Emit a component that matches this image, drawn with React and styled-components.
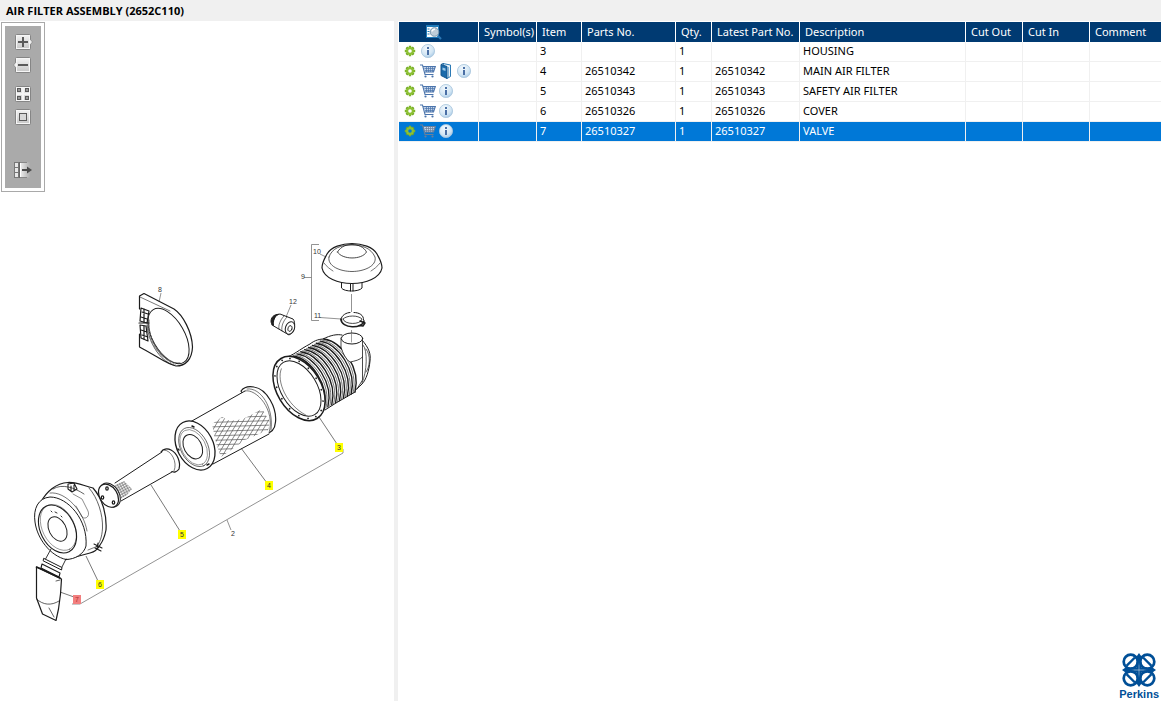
import React from "react";
import styled, { createGlobalStyle, css } from "styled-components";

const GlobalStyle = createGlobalStyle`
  *, *::before, *::after { box-sizing: border-box; }
  body {
    margin: 0;
    background: #fff;
    color: #000;
    font-family: "Noto Sans", "Open Sans", sans-serif;
    font-size: 11px;
    line-height: 16px;
  }
`;

const Page = styled.div`
  min-height: 100vh;
  display: flex;
  flex-direction: column;
`;

const TitleBar = styled.header`
  height: 21px;
  padding: 0 6px;
  background: #f0f0f0;
  display: flex;
  align-items: center;
`;

const Title = styled.h1`
  margin: 0;
  font-family: "Open Sans", "Noto Sans", sans-serif;
  font-size: 11px;
  font-weight: 700;
  line-height: 20px;
`;

const Workspace = styled.main`
  flex: 1;
  display: grid;
  grid-template-columns: 394fr 4px 763fr;
`;

const Splitter = styled.div`
  background: #f0f0f0;
`;

const DiagramPane = styled.section`
  min-width: 0;
  display: flex;
  flex-direction: column;
  align-items: flex-start;
`;

const PartsPane = styled.section`
  min-width: 0;
  padding: 1px 0 0 1px;
  display: flex;
  flex-direction: column;
`;

const ToolFrame = styled.div`
  margin: 1px 0 0 1px;
  padding: 3px;
  border: 1px solid #a9a9a9;
  background: #fff;
`;

const ToolStrip = styled.div`
  display: flex;
  flex-direction: column;
  gap: 13px;
  padding: 8px 10px 10px;
  background: #aaa;
`;

const ToolGroup = styled.div`
  display: flex;
  flex-direction: column;
  gap: 7px;
  padding-top: ${(p) => (p.$apart ? "24px" : "0")};
`;

const iconButton = css`
  padding: 0;
  border: 0;
  background: none;
  display: grid;
  place-items: center;
  cursor: pointer;
`;

const ToolButton = styled.button`
  ${iconButton}
  width: 16px;
  height: 16px;

  svg { overflow: visible; display: block; }
`;

const Drawing = styled.svg`
  display: block;
  width: 100%;
  height: auto;
  font-family: "Liberation Sans", Arial, sans-serif;
  font-size: 7px;
`;

const PartsTable = styled.table`
  width: 100%;
  table-layout: fixed;
  border-collapse: separate;
  border-spacing: 0;
`;

const HeadCell = styled.th`
  height: 20px;
  padding: ${(p) => (p.$icon ? "0 9px 0 0" : "0 0 0 5px")};
  border-right: 1px solid #fff;
  background: #003a72;
  color: #fff;
  font-weight: 400;
  text-align: left;
  white-space: nowrap;
  overflow: hidden;

  &:last-child { border-right: 0; }
  svg { display: block; margin: 0 auto; }
`;

const Row = styled.tr`
  background: ${(p) => (p.$selected ? "#0078d7" : "#fff")};
  color: ${(p) => (p.$selected ? "#fff" : "#000")};
`;

const Cell = styled.td`
  height: 20px;
  padding: 0 0 2px 3px;
  border-right: 1px solid #f0f0f0;
  border-bottom: 1px solid #f0f0f0;
  white-space: nowrap;
  overflow: hidden;

  &:last-child { border-right: 0; }
`;

const IconCell = styled(Cell)`
  padding-left: 2px;
`;

const IconList = styled.div`
  display: flex;
  height: 16px;
  align-items: center;
`;

const RowButton = styled.button`
  ${iconButton}
  width: 18px;
  height: 16px;
`;

const Brand = styled.div`
  margin-top: auto;
  align-self: flex-end;
  padding-right: 2px;
  display: flex;
  flex-direction: column;
  align-items: center;
  color: #004f97;
  font-family: "Liberation Sans", Arial, sans-serif;
  font-size: 11px;
  font-weight: 700;
  line-height: 14px;
`;

/* ---------- toolbar icons ---------- */

function Key({ children, tab }) {
  return (
    <svg width="16" height="16" viewBox="0 0 16 16" aria-hidden="true">
      <defs>
        <linearGradient id="keyFace" x1="0" y1="0" x2="0" y2="1">
          <stop offset="0" stopColor="#f4f4f4" />
          <stop offset="1" stopColor="#c6c6c6" />
        </linearGradient>
      </defs>
      <rect x=".5" y=".5" width="15" height="15" rx="1" fill="url(#keyFace)" stroke="#858585" />
      <rect x="1.500" y="1.500" width="13" height="13" fill="none" stroke="#f6f6f6" />
      {tab === "right" && <path d="M15 5 L17.500 8 L15 11" fill="#eee" stroke="#858585" strokeWidth=".8" />}
      {tab === "left" && <path d="M1 5 L-1.500 8 L1 11" fill="#eee" stroke="#858585" strokeWidth=".8" />}
      {children}
    </svg>
  );
}

const ZoomInIcon = () => (
  <Key tab="right"><path d="M3 8h10M8 3v10" stroke="#5a5a5a" strokeWidth="2" /></Key>
);
const ZoomOutIcon = () => (
  <Key tab="left"><path d="M3 8h10" stroke="#5a5a5a" strokeWidth="2" /></Key>
);
const TilesIcon = () => (
  <Key>
    <path d="M8 2v12M2 8h12" stroke="#f4f4f4" strokeWidth="2" />
    <g fill="#999" stroke="#5a5a5a">
      <rect x="2.500" y="2.500" width="3" height="3" />
      <rect x="10.500" y="2.500" width="3" height="3" />
      <rect x="2.500" y="10.500" width="3" height="3" />
      <rect x="10.500" y="10.500" width="3" height="3" />
    </g>
  </Key>
);
const FitIcon = () => (
  <Key><rect x="4.500" y="4.500" width="7" height="7" fill="#d8d8d8" stroke="#5a5a5a" /></Key>
);
const ExportIcon = () => (
  <svg width="16" height="16" viewBox="0 0 16 16" aria-hidden="true">
    <defs>
      <linearGradient id="fade" x1="0" y1="0" x2="1" y2="0">
        <stop offset="0" stopColor="#f2f2f2" />
        <stop offset="1" stopColor="#aaa" />
      </linearGradient>
    </defs>
    <rect x="-1" y="0" width="5" height="16" fill="#777" />
    <path d="M0 1h3v4H0zM0 6h3v4H0zM0 11h3v4H0z" fill="#e8e8e8" />
    <rect x="4.500" y=".5" width="11" height="15" fill="url(#fade)" />
    <path d="M4.500 0v16" stroke="#666" />
    <path d="M5 .5h7M5 15.500h7" stroke="#888" />
    <path d="M5.500 1v14" stroke="#fff" />
    <path d="M7 8h6" stroke="#4c4c4c" strokeWidth="2" />
    <path d="M12 4.500 L17 8 L12 11.500Z" fill="#4c4c4c" />
  </svg>
);

/* ---------- row icons ---------- */

const GearIcon = ({ hole }) => (
  <svg width="12" height="12" viewBox="0 0 12 12" aria-hidden="true">
    <g stroke="#7db529" strokeWidth="2.400">
      <path d="M6 .8v10.400M.8 6h10.400" />
      <path d="M2.400 2.400l7.200 7.200M9.600 2.400L2.400 9.600" stroke="#6da423" />
    </g>
    <circle cx="6" cy="6" r="3.900" fill="#8cc032" />
    <circle cx="6" cy="6" r="1.800" fill={hole} />
  </svg>
);

const InfoIcon = () => (
  <svg width="14" height="14" viewBox="0 0 14 14" aria-hidden="true">
    <defs>
      <radialGradient id="infoFill" cx=".4" cy=".3" r=".8">
        <stop offset="0" stopColor="#f1f8fd" />
        <stop offset=".6" stopColor="#d3e6f4" />
        <stop offset="1" stopColor="#9dc3e2" />
      </radialGradient>
    </defs>
    <circle cx="7" cy="7" r="6.600" fill="url(#infoFill)" stroke="#a9c6dd" strokeWidth=".8" />
    <rect x="6" y="3" width="2" height="2" fill="#4a6fa5" />
    <rect x="6" y="6" width="2" height="5" fill="#4a6fa5" />
  </svg>
);

const CartIcon = ({ line }) => (
  <svg width="16" height="14" viewBox="0 0 16 14" aria-hidden="true">
    <path d="M3.500 2.500H15L13.500 8H5Z" fill="#c3d3e8" />
    <path d="M6.500 3v5M8.500 3v5M10.500 3v5M12.500 3v5M4.500 4.500h10M5 6.500h9" stroke={line} strokeWidth=".7" />
    <path d="M0 1H2.500L5 10.500H13.500M3.500 2.500H15.300L13.500 8H5" fill="none" stroke={line} strokeWidth="1.100" />
    <circle cx="5.500" cy="12.500" r="1.100" fill={line} />
    <circle cx="12.500" cy="12.500" r="1.100" fill={line} />
  </svg>
);

const BookIcon = () => (
  <svg width="12" height="16" viewBox="0 0 12 16" aria-hidden="true">
    <path d="M3 .5L10.500 2V13.500L7 15.500Z" fill="#e9f3fa" stroke="#2c7ab5" />
    <path d="M1 1.500L7 3.500V15.500L1 12.500Z" fill="#1b6bab" stroke="#15578e" />
    <path d="M2.500 4.500L5.500 5.500V8L2.500 7Z" fill="#9cc8e8" />
    <path d="M1 1.500L3.500 .5" stroke="#15578e" />
    <path d="M8.500 4v10" stroke="#7fb4d8" />
  </svg>
);

const SearchListIcon = () => (
  <svg width="16" height="16" viewBox="0 0 16 16" aria-hidden="true">
    <rect x="0" y="1" width="13" height="13" fill="#1f7ab8" />
    <rect x="1" y="3" width="11" height="10" fill="#fff" />
    <path d="M1.500 5h2M1.500 7.500h2M1.500 10h2" stroke="#1f7ab8" />
    <path d="M11.500 11.500L15 15" stroke="#2b78b5" strokeWidth="2.200" />
    <circle cx="8.500" cy="8" r="4.300" fill="#bfcdd8" stroke="#7795ac" />
    <path d="M6 7.500a2.800 2.800 0 0 1 3-2.300" fill="none" stroke="#fff" strokeWidth="1.400" />
  </svg>
);

/* ---------- exploded view ---------- */

const lerp = (a, b, t) => a + (b - a) * t;

const ribs = Array.from({ length: 17 }, (_, i) => {
  const t = i / 16;
  const dx = lerp(0, 31, t);
  const dy = lerp(0, -17, t);
  return (
    <path
      key={i}
      d={`M${293 + dx} ${356 + dy} C${311 + dx} ${359 + dy} ${330 + dx} ${385 + dy} ${324 + dx} ${409 + dy}`}
      strokeWidth={i % 2 === 0 ? 1.4 : 0.6}
    />
  );
});

const flangeBolts = Array.from({ length: 16 }, (_, i) => {
  const a = (i / 16) * Math.PI * 2;
  return <circle key={i} cx={Math.cos(a) * 32.8} cy={Math.sin(a) * 20} r=".9" fill="#222" stroke="none" />;
});

function Tag({ x, y, children, selected }) {
  return (
    <g>
      <rect x={x} y={y} width="8" height="9" fill={selected ? "#f27f7f" : "#ff0"} />
      <text x={x + 4} y={y + 7} textAnchor="middle" fill={selected ? "#b03030" : "#333"}>{children}</text>
    </g>
  );
}

function ExplodedView() {
  return (
    <Drawing viewBox="0 192 394 509" role="img" aria-label="Air filter assembly exploded view">
      <defs>
        <clipPath id="meshArea">
          <path d="M212 424L222 417L230 421L243 419L262 409L270 422L268 430L245 440L221 457L216 443Z" />
        </clipPath>
        <pattern id="fineMesh" width="2.500" height="2.500" patternUnits="userSpaceOnUse" patternTransform="rotate(-28)">
          <path d="M0 1H2.500M1 0V2.500" stroke="#444" strokeWidth=".55" fill="none" />
        </pattern>
      </defs>

      {/* leader lines */}
      <g fill="none" stroke="#777" strokeWidth=".8">
        <path d="M319 244.500H311.500V320.500H319M304 277.500H311.500" />
        <path d="M320 254L326 257M320 317.500L341 319M291 305L286 317M161 293L159 302" />
        <path d="M343 449V453L80 604H72M227 520L231 530" />
        <path d="M319 417L337 444M241 448L267 483M151 485L180 531M86 556L98 581M60 592L74 597" stroke="#555" />
        <path d="M351.500 294V312M351.500 330V342" />
      </g>

      <g fill="none" stroke="#1c1c1c" strokeWidth="1" strokeLinecap="round" strokeLinejoin="round">
        {/* rain cap */}
        <path d="M341.500 283V288C344 292 359 292 362 288V283" fill="#fff" />
        <path d="M350.500 284V291M353 284V291" />
        <path d="M322 268C322 262 325 258 327 254C331 247 342 243.500 352 243.500C362 243.500 373 247 377 254C379 258 382 262 382 268C380 278 366 283.500 352 283.500C338 283.500 324 278 322 268Z" fill="#fff" strokeWidth="1.200" />
        <path d="M329 257C327 266 340 271.500 352 271.500C364 271.500 377 266 375 257C371 248 362 245 352 245C341 245 332 248 329 257" strokeWidth=".7" />
        <path d="M324 263C327 267 330 269 333 271M380 263C377 267 374 269 371 271" strokeWidth=".6" />
        <path d="M337.500 252C341 246 347 244.500 352 244.500C358 244.500 364 247 366.500 252C362 260 342 260 337.500 252" strokeWidth=".8" />

        {/* clamp */}
        <path d="M341 320C341 315 347 312.500 350 312.500M354 312.500C359 312.500 364 315 363.500 320" strokeWidth="1" />
        <path d="M343 319C344 325 361 325 362 319C358 315 347 315 343 319" strokeWidth=".8" />
        <path d="M341 319C341 329 363 329 364 321" strokeWidth="1.600" />
        <path d="M360 321L365 323L363 326L359 325.500" strokeWidth="1.400" />

        {/* indicator */}
        <path d="M276 315L280 314L293 319C296 322 295 332 289 335L272 325Z" fill="#fff" />
        <path d="M277 314.500C272 315 270 320 271.500 323.500L273.500 325.500C273 321 274 317 278 314.500Z" fill="#222" />
        <path d="M284 316C280 320 278 326 279 329M287 317C283 321 281 327 282 331" strokeWidth=".6" />
        <ellipse cx="290" cy="328" rx="4.500" ry="6.500" transform="rotate(20 290 328)" fill="#fff" />
        <ellipse cx="290" cy="328.500" rx="2" ry="3" transform="rotate(20 290 328.500)" strokeWidth=".8" />

        {/* mounting band */}
        <path d="M139.500 309V296L144 293.500L174 309C183 315 192 332 192.500 347C192 359 186 366 176 366C168 365 155 355 139.500 347V334" strokeWidth="1.200" />
        <path d="M140 297L170 311" strokeWidth=".6" />
        <ellipse cx="168.500" cy="336" rx="30.500" ry="16" transform="rotate(60 168.500 336)" fill="#fff" strokeWidth="1" />
        <path d="M149 320C147 340 163 365 180 363M147 325C149 346 163 363 174 365" strokeWidth=".7" />
        <path d="M148 325C150 347 164 360 176 364" strokeWidth="2.500" stroke="#777" strokeDasharray=".7 .9" strokeLinecap="butt" />
        <path d="M141 308L149 311L147 323L140 321ZM140 325L146 326L148 341L141 338Z" fill="#fff" strokeWidth="1.200" />
        <path d="M142 312L148 314M141 317L147 319M144 309V322M141 330L147 332M142 335L148 337M144 326V339M139 323H149" strokeWidth="1.200" />

        {/* housing */}
        <path d="M323 339C331 335 337 334 342 335M362 340C369 348 371 354 370 361C369 371 366 380 362 384C359 387 357 389 354 391" />
        <path d="M363 345C368 350 367 372 362 383M366 349C371 355 370 367 366 372" strokeWidth=".7" />
        <path d="M282 358L296 353L312 343L324 339C342 345 357 368 355 391L341 400L325 410L308 420Z" fill="#fff" stroke="none" />
        <path d="M284 358C293 356 300 349 310 344C315 340 320 339 324 339M325 410L336 403L355 392" />
        {ribs}
        <path d="M341 338V347C343 354 346 359 350 362C355 362 360 360 362.500 358V338Z" fill="#fff" stroke="none" />
        <path d="M341 338V347C343 354 346 359 350 362C355 361 360 360 362.500 357M362.500 338V380L357 389" strokeWidth=".8" />
        <ellipse cx="352" cy="338.500" rx="10.700" ry="5.500" fill="#fff" />
        <path d="M351.500 333V342" stroke="#777" strokeWidth=".7" />
        <g transform="translate(299 388.500) rotate(59)">
          <ellipse rx="35" ry="22" fill="#fff" strokeWidth="1.500" />
          {flangeBolts}
          <ellipse rx="30.500" ry="18" strokeWidth="1" />
          <path d="M-26 5C-18 16 8 19 26 8" strokeWidth=".5" />
        </g>

        {/* main element */}
        <path d="M241 391C244 387 249 386 254 387C267 389 277 408 275.500 422C275 429 272 433 265 434Z" fill="#fff" strokeWidth="1.200" />
        <path d="M247 389C261 387 274 408 271 430" strokeWidth=".6" />
        <path d="M191 421.500L245 391C258 391 273 412 269 434L213 463Z" fill="#fff" stroke="none" />
        <path d="M191 421.500L245 391M213 464L269 434" />
        <path d="M245 391C256 388 276 410 269 433" strokeWidth=".6" />
        <g clipPath="url(#meshArea)" stroke="#555" strokeWidth=".7">
          {Array.from({ length: 12 }, (_, i) => (
            <path key={`h${i}`} d={`M208 ${409 + i * 4.5}L274 ${407 + i * 4.5}`} />
          ))}
          {Array.from({ length: 16 }, (_, i) => (
            <path key={`d${i}`} d={`M${190 + i * 5} 460L${222 + i * 5} 406`} />
          ))}
        </g>
        <g transform="translate(195 445.500) rotate(62)">
          <ellipse rx="26" ry="18" fill="#fff" strokeWidth="1.300" />
          <ellipse cx="1" cy="1.500" rx="21" ry="13.500" strokeWidth=".6" />
          <ellipse cx="1" cy="2" rx="19" ry="12" strokeWidth=".4" />
          <ellipse cx="0" cy="2.500" rx="13" ry="8.800" strokeWidth="1" />
        </g>
        <path d="M192 426L194 427M207 465L209 464M178 449L179 450" strokeWidth="1.500" />

        {/* safety element */}
        <path d="M161 452C163 449 167 448 171 450C177 453 181 462 179 469C177 472 174 473 171 471Z" fill="#fff" strokeWidth="1.200" />
        <path d="M164 450C171 450 178 462 174 471" strokeWidth=".6" />
        <path d="M114 483L161 452C168 454 173 463 172 471L121 502Z" fill="#fff" stroke="none" />
        <path d="M115 483L162 452M121 501L172 472" />
        <path d="M115 485L124 481L132 489L127 495L119 500Z" fill="url(#fineMesh)" stroke="none" />
        <ellipse cx="110" cy="495" rx="13" ry="9" transform="rotate(57 110 495)" fill="#fff" />
        <ellipse cx="108.500" cy="495.700" rx="12.500" ry="8.800" transform="rotate(57 108.500 495.700)" fill="#fff" strokeWidth="1.200" />
        <g strokeWidth="1.300">
          <ellipse cx="107" cy="488.500" rx="1.200" ry="1.700" />
          <ellipse cx="102.500" cy="497.500" rx="1.200" ry="1.700" />
          <ellipse cx="113.500" cy="502.500" rx="1.200" ry="1.700" />
        </g>

        {/* cover */}
        <path d="M41 502C46 492 56 483 68 482.500C77 482 84 486 93 488C102 498 107 514 106 530C105 535 103 541 100 545C98 549 94 552 90 553L66 559.500Z" fill="#fff" strokeWidth="1.200" />
        <path d="M89 488C98 498 103 515 102.500 528C102 537 100 543 96 547M53 489C62 483 75 488 84 494" strokeWidth=".7" />
        <path d="M66 559.500C75 559.500 84 554 86 546C88 520 68 497 50 497C38 498 33 509 35 522C37 538 50 556 66 559.500Z" fill="#fff" strokeWidth="1" />
        <path d="M50 493C66 491 84 512 87 531M88 550L98 546" strokeWidth=".6" />
        <path d="M73 494L82 499L88 511C90 516 86 520 82 517L76 506" strokeWidth=".5" />
        <g transform="translate(57.500 529) rotate(63)">
          <ellipse rx="25.500" ry="17" strokeWidth="1.100" />
          <ellipse cx="-1" cy="-1.500" rx="24.500" ry="16" strokeWidth=".4" />
          <ellipse rx="13" ry="8.500" strokeWidth="1" />
        </g>
        <path d="M51 511L52 512M55 512L57 513M61 516L62 517" strokeWidth=".9" />
        <path d="M68 484L74 483L77 489L72 492L68 489ZM71 486V491M74 485V490M94 544L102 548M95 548L101 551M98 543L97 549" strokeWidth="1.100" />
        <path d="M51 549L45 560M66 559L61 569" strokeWidth=".9" />
        <path d="M44 558.500L62 567.500L61.500 570L43.500 561Z" fill="#fff" strokeWidth="1" />

        {/* dust valve */}
        <path d="M42 564L60 573L59 577L41 568Z" fill="#fff" strokeWidth="1.100" />
        <path d="M36.500 567L61.500 579L60.500 594L58.500 609L56 620.500L42.500 614L36.500 598Z" fill="#fff" strokeWidth="1.200" />
        <path d="M60 580L56 581M36.500 599C43 605 51 606 59 601M49 608L54 617" strokeWidth=".7" />
        <path d="M36.500 567L41 569L60 578" strokeWidth="1.600" />
      </g>

      <g fill="#333">
        <text x="313" y="254">10</text>
        <text x="301" y="279">9</text>
        <text x="314" y="318">11</text>
        <text x="289" y="304">12</text>
        <text x="158" y="292">8</text>
        <text x="231" y="536">2</text>
      </g>
      <Tag x={335} y={443}>3</Tag>
      <Tag x={265} y={481}>4</Tag>
      <Tag x={178} y={530}>5</Tag>
      <Tag x={96} y={580}>6</Tag>
      <Tag x={73} y={595} selected>7</Tag>
    </Drawing>
  );
}

function LogoMark() {
  const corners = [
    undefined,
    "translate(34 0) scale(-1 1)",
    "translate(0 34) scale(1 -1)",
    "rotate(180 17 17)",
  ];
  return (
    <svg width="34" height="34" viewBox="0 0 34 34" fill="none" stroke="#004f97" strokeWidth="2.700" aria-hidden="true">
      {corners.map((transform, i) => (
        <g key={i} transform={transform}>
          <circle cx="8.700" cy="8.700" r="7" />
          <path d="M4.500 12.900L12.900 4.500" strokeWidth="2.400" />
          <path d="M8.700 15.700H15.700V8.700" strokeWidth="2.200" />
          <path d="M0 17L5 13.500L9 17ZM17 0L13.500 5L17 9Z" fill="#004f97" stroke="none" />
        </g>
      ))}
    </svg>
  );
}

/* ---------- data ---------- */

const columns = [
  { label: "Symbol(s)", width: 58 },
  { label: "Item", width: 45 },
  { label: "Parts No.", width: 94 },
  { label: "Qty.", width: 36 },
  { label: "Latest Part No.", width: 88 },
  { label: "Description", width: 166 },
  { label: "Cut Out", width: 57 },
  { label: "Cut In", width: 67 },
  { label: "Comment" },
];

const parts = [
  { item: 3, no: "", qty: 1, name: "HOUSING" },
  { item: 4, no: "26510342", qty: 1, name: "MAIN AIR FILTER", cart: true, book: true },
  { item: 5, no: "26510343", qty: 1, name: "SAFETY AIR FILTER", cart: true },
  { item: 6, no: "26510326", qty: 1, name: "COVER", cart: true },
  { item: 7, no: "26510327", qty: 1, name: "VALVE", cart: true, selected: true },
];

function PartRow({ part }) {
  return (
    <Row $selected={part.selected} aria-selected={!!part.selected}>
      <IconCell>
        <IconList>
          <RowButton aria-label="Options"><GearIcon hole={part.selected ? "#0078d7" : "#fff"} /></RowButton>
          {part.cart && (
            <RowButton aria-label="Add to cart"><CartIcon line={part.selected ? "#6b7f99" : "#4b74ac"} /></RowButton>
          )}
          {part.book && <RowButton aria-label="Open manual"><BookIcon /></RowButton>}
          <RowButton aria-label="Information"><InfoIcon /></RowButton>
        </IconList>
      </IconCell>
      <Cell />
      <Cell>{part.item}</Cell>
      <Cell>{part.no}</Cell>
      <Cell>{part.qty}</Cell>
      <Cell>{part.no}</Cell>
      <Cell>{part.name}</Cell>
      <Cell />
      <Cell />
      <Cell />
    </Row>
  );
}

export default function App() {
  return (
    <Page>
      <GlobalStyle />
      <TitleBar><Title>AIR FILTER ASSEMBLY (2652C110)</Title></TitleBar>
      <Workspace>
        <DiagramPane>
          <ToolFrame>
            <ToolStrip>
              <ToolGroup>
                <ToolButton aria-label="Zoom in"><ZoomInIcon /></ToolButton>
                <ToolButton aria-label="Zoom out"><ZoomOutIcon /></ToolButton>
              </ToolGroup>
              <ToolGroup>
                <ToolButton aria-label="Tile"><TilesIcon /></ToolButton>
                <ToolButton aria-label="Fit to window"><FitIcon /></ToolButton>
              </ToolGroup>
              <ToolGroup $apart>
                <ToolButton aria-label="Detach list"><ExportIcon /></ToolButton>
              </ToolGroup>
            </ToolStrip>
          </ToolFrame>
          <ExplodedView />
        </DiagramPane>
        <Splitter />
        <PartsPane>
          <PartsTable>
            <colgroup>
              <col width="80" />
              {columns.map((c) => <col key={c.label} width={c.width} />)}
            </colgroup>
            <thead>
              <tr>
                <HeadCell $icon scope="col" aria-label="Actions"><SearchListIcon /></HeadCell>
                {columns.map((c) => <HeadCell key={c.label} scope="col">{c.label}</HeadCell>)}
              </tr>
            </thead>
            <tbody>
              {parts.map((p) => <PartRow key={p.item} part={p} />)}
            </tbody>
          </PartsTable>
          <Brand>
            <LogoMark />
            <span>Perkins</span>
          </Brand>
        </PartsPane>
      </Workspace>
    </Page>
  );
}
